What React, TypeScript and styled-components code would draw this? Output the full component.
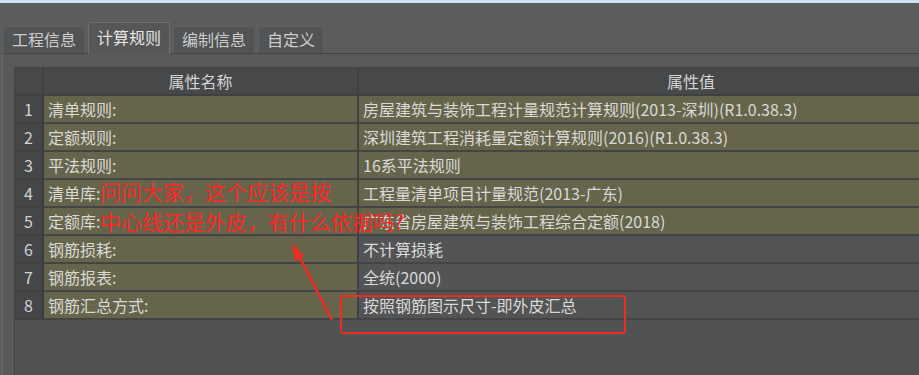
import React from 'react';
import styled, {createGlobalStyle} from 'styled-components';

const GlobalStyle = createGlobalStyle`
    html, body {
        margin: 0;
        padding: 0;
        background: #5b5c5c;
        font-family: "Noto Sans CJK SC", "Noto Sans", sans-serif;
    }
    * { box-sizing: border-box; }
`

const Page = styled.div`
    position: relative;
    width: 919px;
    height: 375px;
    overflow: hidden;
    background: #5b5c5c;
    border-top: 3px solid #cfdff5;
    display: flex;
    flex-direction: column;
`

const TabBar = styled.div`
    height: 50px;
    display: flex;
    align-items: flex-end;
    gap: 3px;
    padding-left: 3px;
    flex-shrink: 0;
`

const Tab = styled.div<{ $active?: boolean }>`
    height: ${p => p.$active ? '32px' : '27px'};
    padding: 0 8px 3px;
    display: flex;
    align-items: center;
    font-size: 16px;
    line-height: 1;
    color: ${p => p.$active ? '#e6e6e6' : '#cdcdcd'};
    background: ${p => p.$active ? '#555657' : '#525354'};
    border: 1px solid ${p => p.$active ? '#6d6e6f' : '#5e5f60'};
    border-bottom: none;
    border-radius: 3px 3px 0 0;
    margin-bottom: ${p => p.$active ? '-1px' : '0'};
    position: relative;
    z-index: ${p => p.$active ? 2 : 1};
`

const Panel = styled.div`
    flex: 1;
    margin-left: 2px;
    background: #58595a;
    border-top: 1px solid #444546;
    border-left: 1px solid #6a6b6c;
    padding: 13px 0 0 11px;
    display: flex;
`

const Sheet = styled.div`
    flex: 1;
    background: #515254;
    border-left: 1px solid #444547;
    border-top: 1px solid #444547;
    overflow: hidden;
`

const Grid = styled.div`
    display: grid;
    grid-template-columns: 29px 315px 666px;
    grid-auto-rows: 28px;
`

const HeadCell = styled.div`
    background: #47484a;
    border-right: 2px solid #3f4042;
    border-bottom: 2px solid #3f4042;
    color: #d4d4d4;
    font-size: 16px;
    display: flex;
    align-items: center;
    justify-content: center;
`

const NumCell = styled.div`
    background: #454648;
    border-right: 2px solid #3c3d3f;
    border-bottom: 2px solid #404143;
    color: #d2d2d2;
    font-size: 16px;
    display: flex;
    align-items: center;
    justify-content: center;
`

const Cell = styled.div<{ $olive?: boolean }>`
    background: ${p => p.$olive ? '#66654c' : '#535456'};
    border-right: 2px solid #404143;
    border-bottom: 2px solid #434446;
    color: #d9d9d6;
    font-size: 16px;
    padding-left: 4px;
    display: flex;
    align-items: center;
    white-space: nowrap;
`

const Note = styled.div`
    position: absolute;
    left: 100px;
    top: 173px;
    color: #ff2626;
    font-size: 21px;
    line-height: 30px;
    white-space: nowrap;
    pointer-events: none;
`

const Marker = styled.div`
    position: absolute;
    left: 340px;
    top: 292px;
    width: 286px;
    height: 39px;
    border: 2.5px solid #f22a22;
    border-radius: 3px;
`

const ArrowLayer = styled.svg`
    position: absolute;
    left: 0;
    top: 0;
    pointer-events: none;
`

const rows: [string, string, boolean][] = [
    ['清单规则:', '房屋建筑与装饰工程计量规范计算规则(2013-深圳)(R1.0.38.3)', true],
    ['定额规则:', '深圳建筑工程消耗量定额计算规则(2016)(R1.0.38.3)', true],
    ['平法规则:', '16系平法规则', true],
    ['清单库:', '工程量清单项目计量规范(2013-广东)', true],
    ['定额库:', '广东省房屋建筑与装饰工程综合定额(2018)', true],
    ['钢筋损耗:', '不计算损耗', false],
    ['钢筋报表:', '全统(2000)', false],
    ['钢筋汇总方式:', '按照钢筋图示尺寸-即外皮汇总', false],
];

const tabs = ['工程信息', '计算规则', '编制信息', '自定义'];

const App: React.FC = () => {
    return (
        <Page>
            <GlobalStyle />
            <TabBar>
                {tabs.map((t, i) => (
                    <Tab key={t} $active={i === 1}>{t}</Tab>
                ))}
            </TabBar>
            <Panel>
                <Sheet>
                    <Grid>
                        <HeadCell />
                        <HeadCell>属性名称</HeadCell>
                        <HeadCell>属性值</HeadCell>
                        {rows.map(([name, value, olive], i) => (
                            <React.Fragment key={name}>
                                <NumCell>{i + 1}</NumCell>
                                <Cell $olive>{name}</Cell>
                                <Cell $olive={olive}>{value}</Cell>
                            </React.Fragment>
                        ))}
                    </Grid>
                </Sheet>
            </Panel>

            <Note>
                问问大家，这个应该是按<br />
                中心线还是外皮，有什么依据吗?
            </Note>
            <Marker />
            <ArrowLayer width="919" height="375" viewBox="0 0 919 375">
                <line x1="332" y1="317" x2="299" y2="253" stroke="#f22a22" strokeWidth="2.5" />
                <polygon points="292,240 304,253 295,258" fill="#f22a22" />
            </ArrowLayer>
        </Page>
    )
}

export default App
